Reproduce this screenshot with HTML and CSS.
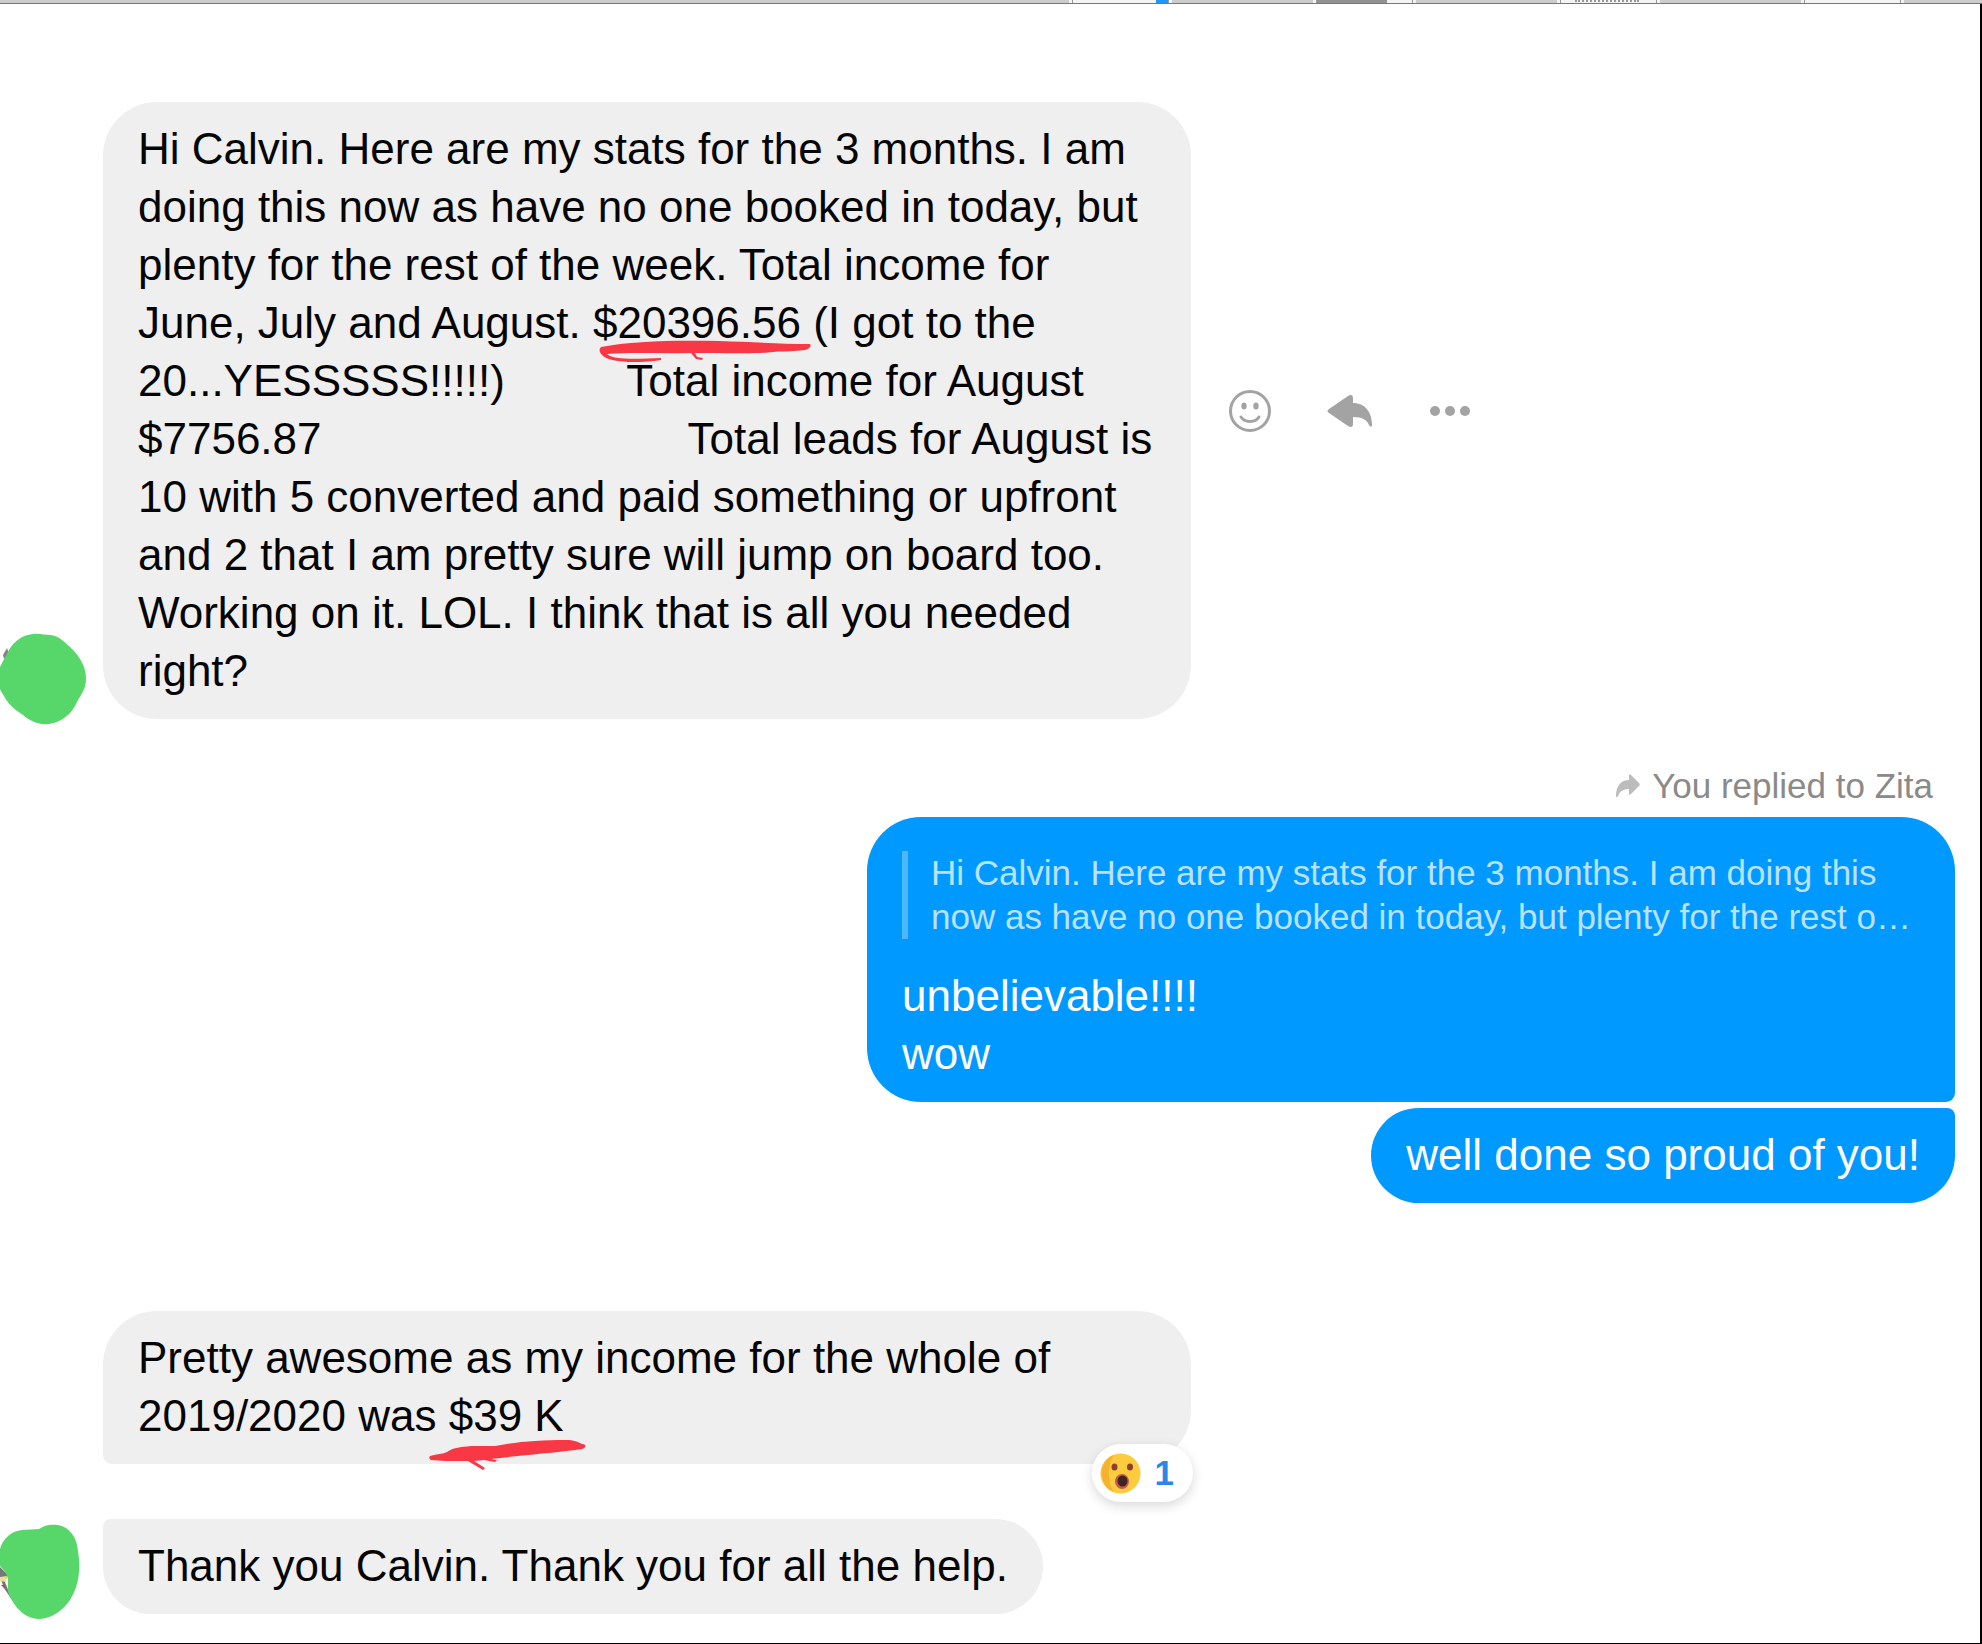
FILE: index.html
```
<!DOCTYPE html>
<html lang="en">
<head>
    <meta charset="UTF-8">
    <meta name="viewport" content="width=device-width, initial-scale=1.0">
    <title>Chat</title>
    <link rel="stylesheet" href="styles.css">
</head>
<body>
    <!-- Bottom edge of the tab previews -->
    <div class="tab-strip">
        <div class="tab-space first"></div>
        <div class="tab-thumb"><span class="thumb-blue"></span></div>
        <div class="tab-space"></div>
        <div class="tab-thumb"><span class="thumb-dark"></span></div>
        <div class="tab-space"></div>
        <div class="tab-thumb"><span class="thumb-text"></span></div>
        <div class="tab-space"></div>
        <div class="tab-thumb"></div>
        <div class="tab-space last"></div>
    </div>

    <main class="chat">
        <div class="row received">
            <svg class="avatar" viewBox="0 0 88 96" aria-hidden="true">
                <path fill="#8b8088" d="M3 26l4-7 2 6-5 5z"/>
                <path fill="#57d769" d="M7 25C12 13 22 6 33 5C39 4 45 6 51 6C59 7 66 14 72 20C80 28 86 38 86 49C86 60 82 64 77 73C72 85 62 93 49 95C38 96 30 92 23 86C14 80 8 75 4 67C2 64 1 62 0 60V38C2 34 4 30 7 25Z"/>
            </svg>
            <div class="bubble wide">Hi Calvin. Here are my stats for the 3 months. I am doing this now as have no one booked in today, but plenty for the rest of the week. Total income for June, July and August. <span class="marked">$20396.56<svg class="stroke stroke-income" viewBox="0 0 212 24" aria-hidden="true"><path fill="#f93846" d="M2 7C32 1 76 0 120 1C155 2 183 4 211 4C213 6 210 9 206 10C192 12 179 11 174 12C160 14 138 13 96 13L98 17L104 18L103 20L97 19L92 13C62 14 34 12 8 14C14 20 37 19 62 18V20C36 24 8 22 3 15C0 12 0 9 2 7Z"/></svg></span> (I got to the 20...YESSSSS!!!!!)          Total income for August $7756.87                              Total leads for August is 10 with 5 converted and paid something or upfront and 2 that I am pretty sure will jump on board too. Working on it. LOL. I think that is all you needed right?</div>
            <div class="actions">
                <button type="button" aria-label="React">
                    <svg width="44" height="44" viewBox="0 0 44 44"><circle cx="22" cy="22" r="19.5" fill="none" stroke="#a3a3a3" stroke-width="3"/><ellipse cx="16" cy="17" rx="2.7" ry="3.5" fill="#a3a3a3"/><ellipse cx="28" cy="17" rx="2.7" ry="3.5" fill="#a3a3a3"/><path d="M13 28C17 34 27 34 31 28" fill="none" stroke="#a3a3a3" stroke-width="3" stroke-linecap="round"/></svg>
                </button>
                <button type="button" aria-label="Reply">
                    <svg width="46" height="34" viewBox="0 0 46 34"><path fill="#a3a3a3" d="M2 15L21 2C24 0 26 1 26 4V9C38 9 45 18 45 31C45 33 43 33 42 31C40 26 36 23 26 23V30C26 33 24 34 21 32L2 19C0 18 0 16 2 15Z"/></svg>
                </button>
                <button type="button" aria-label="More">
                    <svg width="40" height="12" viewBox="0 0 40 12"><g fill="#a3a3a3"><circle cx="5" cy="6" r="5"/><circle cx="20" cy="6" r="5"/><circle cx="35" cy="6" r="5"/></g></svg>
                </button>
            </div>
        </div>

        <div class="reply-label">
            <svg width="24" height="24" viewBox="0 0 24 24" aria-hidden="true"><path fill="#bcbcbc" d="M0 22C0 12 5 6 13 6V1C13 0 14 0 15 1L23 9C24 10 24 11 23 12L15 20C14 21 13 21 13 20V15C7 15 4 17 2 22C1 24 0 23 0 22Z"/></svg>
            <span>You replied to Zita</span>
        </div>

        <div class="row sent">
            <div class="bubble wide group-top">
                <blockquote class="quote">Hi Calvin. Here are my stats for the 3 months. I am doing this now as have no one booked in today, but plenty for the rest o…</blockquote>
                <p>unbelievable!!!!</p>
                <p>wow</p>
            </div>
        </div>
        <div class="row sent">
            <div class="bubble group-bottom">well done so proud of you!</div>
        </div>

        <div class="row received later">
            <div class="avatar"></div>
            <div class="bubble wide group-top">Pretty awesome as my income for the whole of 2019/2020 was <span class="marked">$39 K<svg class="stroke stroke-year" viewBox="0 0 158 32" aria-hidden="true"><path fill="#f93846" d="M1 17C8 15 14 15 18 13C23 9 31 8 42 7L66 7C86 3 110 1 137 1C145 1 149 3 153 5C158 5 157 9 153 10C134 13 105 15 62 20L68 21L66 23L55 21L45 22L56 29L54 31L39 22C22 22 10 22 2 21C0 20 0 18 1 17Z"/></svg></span><button class="reaction" type="button" aria-label="1 reaction"><svg width="41" height="41" viewBox="0 0 41 41"><circle cx="20.500" cy="20.500" r="20" fill="#fdcb3e"/><path fill="#f4b22f" d="M14 2A20 20 0 0 0 14 39C7 29 7 13 14 2Z"/><ellipse cx="14.500" cy="14" rx="3" ry="3.500" fill="#913d31"/><ellipse cx="30" cy="14" rx="3" ry="3.500" fill="#913d31"/><ellipse cx="22" cy="28.500" rx="7" ry="7.500" fill="#c9574b"/><ellipse cx="22.500" cy="28" rx="5" ry="5.500" fill="#402426"/></svg><span>1</span></button></div>
        </div>
        <div class="row received after-reaction">
            <svg class="avatar" viewBox="0 0 88 96" aria-hidden="true">
                <path fill="#777" d="M0 43L8 51L5 58L12 76L4 64L0 53Z"/>
                <path fill="#e9df9a" d="M0 53L7 52L6 58L0 57Z"/>
                <path fill="#d33" d="M1 61l3 0 1 4z"/>
                <path fill="#57d769" d="M0 25C3 14 12 7 22 6L39 5C44 1 51 0 58 1C70 3 77 14 78 27C81 45 79 62 70 76C62 88 50 95 38 95C24 94 16 84 10 73C7 67 8 61 8 55C7 50 4 46 0 42Z"/>
            </svg>
            <div class="bubble group-bottom">Thank you Calvin. Thank you for all the help.</div>
        </div>
    </main>
</body>
</html>
```
FILE: styles.css
```
* {
    box-sizing: border-box;
}
body {
    margin: 0;
    min-height: 100vh;
    display: flex;
    flex-direction: column;
    background-color: #fff;
    font-family: "Liberation Sans", Arial, sans-serif;
    font-size: 44px;
    line-height: 58px;
    color: #050505;
}
p, blockquote {
    margin: 0;
}
button {
    border: none;
    background: none;
    padding: 0;
    font-family: inherit;
    cursor: pointer;
}

/* Tab previews */
.tab-strip {
    display: flex;
    gap: 3px;
    height: 4px;
    background-color: #f4f4f4;
    border-bottom: 1px solid #777;
}
.tab-space {
    flex: 0 0 141px;
    background-color: #ccc;
}
.tab-space.first {
    flex: 1;
}
.tab-space.last {
    flex-basis: 78px;
}
.tab-thumb {
    flex: 0 0 97px;
    display: flex;
    border-left: 1px solid #999;
    border-right: 1px solid #999;
}
.thumb-blue {
    width: 12px;
    margin-left: auto;
    background-color: #2196f3;
}
.thumb-dark {
    width: 70px;
    background-color: #929292;
}
.thumb-text {
    width: 64px;
    margin-left: 14px;
    border-top: 2px dotted #999;
}

/* Conversation */
.chat {
    flex: 1;
    padding: 98px 25px 26px 0;
    border-right: 2px solid #000;
    border-bottom: 1px solid #000;
}
.row {
    display: flex;
    align-items: flex-end;
}
.row.sent {
    justify-content: flex-end;
    margin-bottom: 6px;
}
.row.later {
    margin-top: 108px;
}
.row.after-reaction {
    margin-top: 55px;
}
.avatar {
    flex: none;
    width: 88px;
    margin-right: 15px;
    margin-bottom: -6px;
}
.bubble {
    position: relative;
    padding: 18px 35px 19px;
    border-radius: 54px;
    background-color: #efefef;
    white-space: pre-wrap;
}
.bubble.wide {
    flex: none;
    width: 1088px;
    max-width: 56%;
}
.sent .bubble {
    background-color: #0099ff;
    color: #fff;
    white-space: normal;
}
.sent .group-top {
    border-bottom-right-radius: 9px;
}
.sent .group-bottom {
    border-top-right-radius: 9px;
}
.received .group-top {
    border-bottom-left-radius: 9px;
}
.received .group-bottom {
    border-top-left-radius: 9px;
}

/* Buttons beside the message */
.actions {
    align-self: center;
    display: flex;
    gap: 40px;
    margin-left: 29px;
}
.actions button {
    display: flex;
    align-items: center;
    justify-content: center;
    width: 60px;
    height: 60px;
}

/* Reply preview */
.reply-label {
    display: flex;
    align-items: center;
    justify-content: flex-end;
    gap: 12px;
    margin: 45px 22px 9px 0;
    font-size: 35px;
    line-height: 44px;
    color: #8a8a8a;
}
.quote {
    margin: 16px 0 28px;
    padding-left: 23px;
    border-left: 6px solid #4db8ff;
    font-size: 35px;
    line-height: 44px;
    color: #b8e2ff;
}

/* Red pen strokes under the amounts */
.marked {
    position: relative;
    white-space: nowrap;
}
.stroke {
    position: absolute;
}
.stroke-income {
    left: 6px;
    top: 42px;
    width: 212px;
    height: 24px;
}
.stroke-year {
    left: -20px;
    top: 48px;
    width: 158px;
    height: 32px;
}

.reaction {
    position: absolute;
    right: -2px;
    bottom: -38px;
    display: flex;
    align-items: center;
    gap: 14px;
    height: 58px;
    padding: 0 19px 0 8px;
    border-radius: 29px;
    background-color: #fff;
    box-shadow: 0 4px 12px rgba(0,0,0,0.15);
    font-size: 35px;
    font-weight: bold;
    color: #2b87e3;
}
```
